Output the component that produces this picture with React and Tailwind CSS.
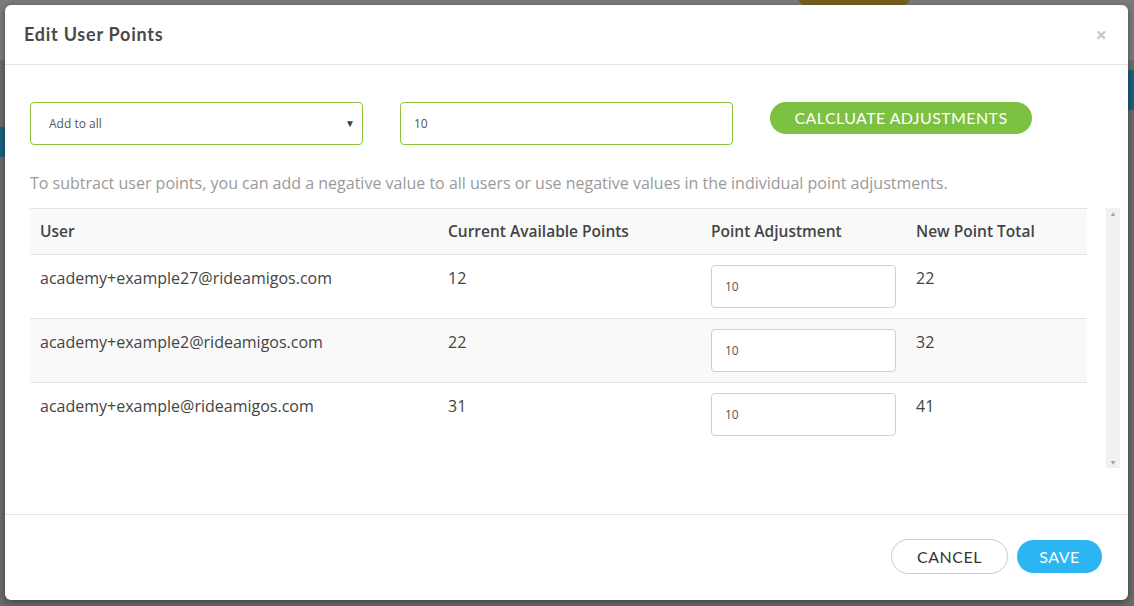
import React from "react";

const rows = [
  { email: "academy+example27@rideamigos.com", current: 12, adjust: "10", total: 22 },
  { email: "academy+example2@rideamigos.com", current: 22, adjust: "10", total: 32 },
  { email: "academy+example@rideamigos.com", current: 31, adjust: "10", total: 41 },
];

const font = { fontFamily: "'Open Sans', sans-serif" };

const App = () => {
  return (
    <div className="relative w-[1134px] h-[606px] overflow-hidden bg-[#6a6a6a]" style={font}>
      {/* page behind the overlay */}
      <div className="absolute left-0 top-0 w-full h-[60px] bg-[#7a7a7a]"></div>
      <div className="absolute left-[793px] top-[-40px] w-[122px] h-[50px] rounded-full bg-[#75601f]"></div>
      <div className="absolute left-0 top-[127px] w-[6px] h-[30px] bg-[#1b5f7e]"></div>
      <div className="absolute right-0 top-[70px] w-[8px] h-[40px] bg-[#1b5f7e]"></div>

      {/* modal */}
      <div className="absolute left-[5px] top-[5px] w-[1123px] h-[595px] bg-white rounded-[6px] shadow-[0_2px_6px_rgba(0,0,0,0.4)] flex flex-col">
        <div className="h-[60px] flex items-center justify-between pl-[19px] pr-[21px] border-b border-[#e5e5e5]">
          <h2 className="text-[18px] font-bold text-[#4a4a4a]" style={{ fontFamily: "Lato, sans-serif", letterSpacing: "0.75px" }}>Edit User Points</h2>
          <span className="text-[20px] font-bold text-[#c8c8c8] leading-none">×</span>
        </div>

        <div className="h-[450px] pl-[25px] pt-[37px] border-b border-[#e5e5e5]">
          <div className="flex items-start">
            <div className="relative w-[333px] h-[43px] border border-[#8cc43c] rounded-[4px] flex items-center pl-[18px]">
              <span className="text-[12px] text-[#555]">Add to all</span>
              <span className="absolute right-[7px] top-[13px] text-[10px] text-[#444]">▼</span>
            </div>
            <div className="ml-[37px] w-[333px] h-[43px] border border-[#8cc43c] rounded-[4px] flex items-center pl-[13px]">
              <span className="text-[12px] text-[#555]">10</span>
            </div>
            <button className="ml-[37px] w-[262px] h-[32px] rounded-full bg-[#7dc142] text-white text-[16px]" style={{ fontFamily: "Lato, sans-serif", letterSpacing: "0.4px" }}>
              CALCLUATE ADJUSTMENTS
            </button>
          </div>

          <p className="mt-[28px] text-[16px] leading-[20px] text-[#9a9a9a]">
            To subtract user points, you can add a negative value to all users or use negative values in the individual point adjustments.
          </p>

          <div className="mt-[15px] flex">
            <div className="w-[1057px] h-[260px]">
              <div className="flex h-[47px] items-center bg-[#f9f9f9] border-t border-b border-[#e2e2e2] text-[15.5px] font-semibold text-[#444]">
                <div className="w-[408px] pl-[10px]">User</div>
                <div className="w-[263px] pl-[10px]">Current Available Points</div>
                <div className="w-[205px] pl-[10px]">Point Adjustment</div>
                <div className="pl-[10px]">New Point Total</div>
              </div>
              {rows.map((r, i) => (
                <div
                  key={r.email}
                  className={`flex h-[64px] text-[16px] leading-[20px] text-[#444] ${i === 1 ? "bg-[#f9f9f9]" : "bg-white"} ${i < 2 ? "border-b border-[#e2e2e2]" : ""}`}
                >
                  <div className="w-[408px] pl-[10px] pt-[13px]">{r.email}</div>
                  <div className="w-[263px] pl-[10px] pt-[13px]">{r.current}</div>
                  <div className="w-[205px] pl-[10px] pt-[10px]">
                    <div className="w-[185px] h-[43px] bg-white border border-[#cfcfcf] rounded-[4px] flex items-center pl-[13px]">
                      <span className="text-[12px] text-[#555]">{r.adjust}</span>
                    </div>
                  </div>
                  <div className="pl-[10px] pt-[13px]">{r.total}</div>
                </div>
              ))}
            </div>
            <div className="ml-[19px] w-[14px] h-[260px] bg-[#f1f1f1] flex flex-col justify-between items-center py-[2px]">
              <span className="text-[7px] text-[#a3a3a3] leading-none">▲</span>
              <span className="text-[7px] text-[#a3a3a3] leading-none">▼</span>
            </div>
          </div>
        </div>

        <div className="flex-1 flex items-start justify-end pr-[26px] pt-[24px] gap-[9px]">
          <button className="w-[117px] h-[35px] rounded-full border border-[#cccccc] bg-white text-[16px] text-[#333]" style={{ fontFamily: "Lato, sans-serif", letterSpacing: "0.5px" }}>
            CANCEL
          </button>
          <button className="w-[85px] h-[33px] mt-[1px] rounded-full bg-[#2bb6f3] text-[16px] text-white" style={{ fontFamily: "Lato, sans-serif", letterSpacing: "0.5px" }}>
            SAVE
          </button>
        </div>
      </div>
    </div>
  );
};

export default App;
